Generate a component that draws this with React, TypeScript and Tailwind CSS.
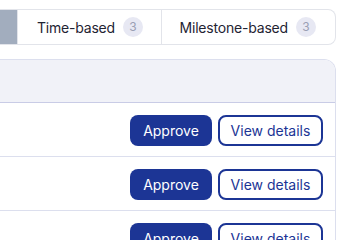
import React from 'react';

type Tab = { label: string; count: number; width: string; pad: string };

const TABS: Tab[] = [
  { label: 'Time-based', count: 3, width: 'w-[144px]', pad: 'pl-[19px]' },
  { label: 'Milestone-based', count: 3, width: 'w-[175px]', pad: 'pl-[18px]' },
];

const ROWS = [1, 2, 3];

export default function App() {
  return (
    <div className="w-[346px] h-[240px] overflow-hidden bg-white font-['Inter',sans-serif] text-[#1f2433]">
      {/* segmented filter, first segment scrolled off to the left */}
      <div className="pt-[9px] pr-[10px]">
        <div className="flex h-[36px] border border-l-0 border-[#e2e4ea] rounded-r-[8px] overflow-hidden">
          <div className="w-[17px] bg-[#a2adbe]" />
          {TABS.map((t) => (
            <div
              key={t.label}
              className={`${t.width} ${t.pad} flex items-center gap-[8px] text-[14px] tracking-[-0.2px] border-l border-[#e2e4ea]`}
            >
              <span>{t.label}</span>
              <span className="w-[20px] h-[20px] rounded-full bg-[#e7e8f3] text-[#9a9fb3] text-[12px] flex items-center justify-center">
                {t.count}
              </span>
            </div>
          ))}
        </div>
      </div>

      {/* table card */}
      <div className="mt-[14px] mr-[10px] border border-l-0 border-[#dcdfee] rounded-tr-[12px] overflow-hidden">
        <div className="h-[43px] bg-[#f1f2f8] border-b border-[#c9cce6]" />
        {ROWS.map((r) => (
          <div key={r} className="h-[54px] flex items-start justify-end gap-[6px] pt-[12px] pr-[12px] border-b border-[#dcdfee]">
            <button className="h-[31px] w-[82px] rounded-[8px] bg-[#1c3595] text-white text-[14px]">
              Approve
            </button>
            <button className="h-[31px] w-[105px] rounded-[8px] border-2 border-[#1c3595] bg-white text-[#1c3595] text-[14px]">
              View details
            </button>
          </div>
        ))}
      </div>
    </div>
  );
}
